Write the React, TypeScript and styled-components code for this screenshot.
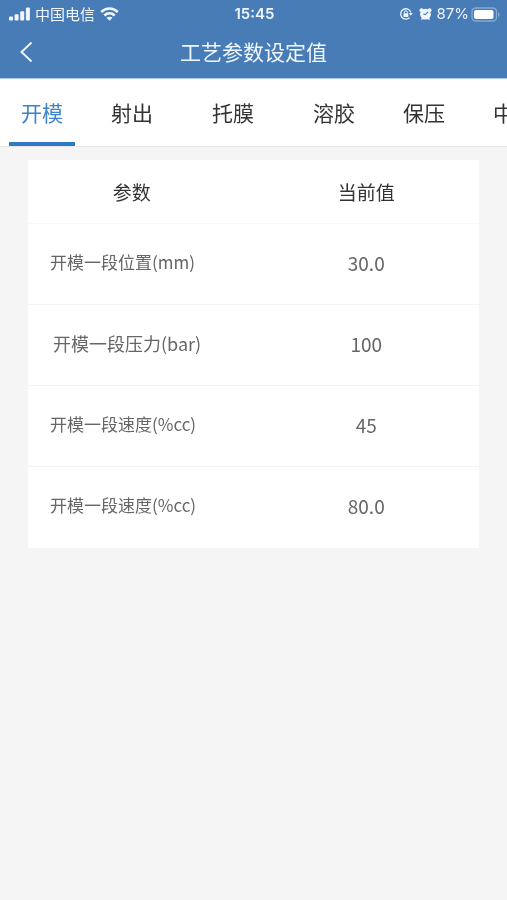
import React, { useState } from "react";
import styled, { createGlobalStyle } from "styled-components";

const GlobalStyle = createGlobalStyle`
  *, *::before, *::after { box-sizing: border-box; }
  body {
    margin: 0;
    background: #f5f5f5;
    font-family: "Noto Sans CJK SC", sans-serif;
  }
`;

const Page = styled.div`
  min-height: 100vh;
  background: #f5f5f5;
`;

const Header = styled.header`
  background: #477cb7;
  color: #eff6fd;
  border-bottom: 1px solid #a9cdf0;
`;

const StatusBar = styled.div`
  display: grid;
  grid-template-columns: 1fr auto 1fr;
  align-items: center;
  height: 28px;
  padding: 0 7px 0 9px;
  font-size: 15px;
  line-height: 20px;
`;

const StatusGroup = styled.div<{ $end?: boolean }>`
  display: flex;
  align-items: center;
  justify-content: ${(p) => (p.$end ? "flex-end" : "flex-start")};
  gap: 5px;
  svg { display: block; flex: none; }
`;

const Clock = styled.time`
  font-family: Inter, sans-serif;
  font-weight: 600;
  font-size: 15px;
`;

const Battery = styled.span`
  display: flex;
  align-items: center;
  gap: 2px;
  font-family: Inter, sans-serif;
  font-size: 15px;
`;

const NavBar = styled.div`
  display: grid;
  grid-template-columns: 48px 1fr 48px;
  align-items: center;
  height: 50px;
  padding-bottom: 4px;
`;

const BackButton = styled.button`
  display: flex;
  align-items: center;
  height: 40px;
  padding: 2px 0 0 19px;
  border: 0;
  background: none;
  color: inherit;
  cursor: pointer;
`;

const Title = styled.h1`
  margin: 0;
  text-align: center;
  font-size: 21px;
  line-height: 30px;
  font-weight: 400;
`;

const TabBar = styled.nav`
  display: flex;
  height: 68px;
  padding-left: 9px;
  overflow-x: auto;
  scrollbar-width: none;
  background: #fff;
  border-bottom: 1px solid #e6e6e6;
`;

const Tab = styled.button<{ $active: boolean; $wide?: boolean }>`
  flex: none;
  margin-left: ${(p) => (p.$wide ? 35 : 24)}px;
  padding: 2px 12px 0;
  border: 0;
  border-bottom: 4px solid ${(p) => (p.$active ? "#3079c4" : "transparent")};
  background: none;
  color: ${(p) => (p.$active ? "#3b83cb" : "#333")};
  font-family: inherit;
  font-size: 21px;
  line-height: 30px;
  cursor: pointer;
  &:first-child { margin-left: 0; }
`;

const Content = styled.main`
  padding: 13px 28px;
`;

const Table = styled.table`
  width: 100%;
  table-layout: fixed;
  border-collapse: separate;
  border-spacing: 0;
  background: #fff;
`;

const HeadCell = styled.th<{ $first?: boolean }>`
  height: 64px;
  padding: ${(p) => (p.$first ? "0 18px 0 0" : "0")};
  border-bottom: 1px solid #f8f8f8;
  color: #333;
  font-size: 19px;
  line-height: 28px;
  font-weight: 400;
`;

const Row = styled.tr`
  &:not(:last-child) > * { border-bottom: 1px solid #f3f3f3; }
`;

const Label = styled.th<{ $large?: boolean }>`
  height: 81px;
  padding: 0 0 5px ${(p) => (p.$large ? 25 : 22)}px;
  text-align: left;
  color: #666;
  font-size: ${(p) => (p.$large ? 18 : 17)}px;
  line-height: 28px;
  font-weight: 400;
  white-space: nowrap;
`;

const Value = styled.td`
  padding: 0 0 3px;
  text-align: center;
  color: #666;
  font-size: 19px;
  line-height: 28px;
`;

const tabs = [
  { name: "开模" },
  { name: "射出" },
  { name: "托膜", wide: true },
  { name: "溶胶", wide: true },
  { name: "保压" },
  { name: "中" },
];

const rows = [
  { label: "开模一段位置(mm)", value: "30.0" },
  { label: "开模一段压力(bar)", value: "100", large: true },
  { label: "开模一段速度(%cc)", value: "45" },
  { label: "开模一段速度(%cc)", value: "80.0" },
];

const SignalIcon = () => (
  <svg width="21" height="14" viewBox="0 0 21 14" fill="currentColor" aria-hidden="true">
    <rect x="0" y="9.5" width="4" height="4" rx="1" />
    <rect x="5.6" y="7.3" width="4" height="6.2" rx="1" />
    <rect x="11.2" y="4.2" width="4" height="9.3" rx="1" />
    <rect x="16.9" y="0.6" width="4" height="12.9" rx="1" />
  </svg>
);

const WifiIcon = () => (
  <svg width="19" height="14" viewBox="0 0 19 14" fill="none" stroke="currentColor" strokeWidth="2.6" aria-hidden="true">
    <path d="M1.2 5C6.2.4 12.8.4 17.8 5" />
    <path d="M4.3 8.4c3.1-2.7 7.3-2.7 10.4 0" />
    <path d="M9.5 13.7 6.5 10.8c1.6-1.4 4.4-1.4 6 0z" fill="currentColor" stroke="none" />
  </svg>
);

const RotationLockIcon = () => (
  <svg width="14" height="14" viewBox="0 0 14 14" fill="none" stroke="currentColor" aria-hidden="true">
    <path d="M11.8 5.4A5.2 5.2 0 1 0 10.6 10.6" strokeWidth="1.3" />
    <path d="M9.8 6h4l-2 2.8z" fill="currentColor" stroke="none" />
    <rect x="4.5" y="6.3" width="4.8" height="3.6" rx=".5" fill="currentColor" stroke="none" />
    <path d="M5.4 6.5V5.3a1.5 1.5 0 0 1 3 0v1.2" />
  </svg>
);

const AlarmIcon = () => (
  <svg width="14" height="14" viewBox="0 0 14 14" aria-hidden="true">
    <g fill="currentColor">
      <circle cx="7.5" cy="7.2" r="5.4" />
      <circle cx="3.5" cy="3.2" r="2" />
      <circle cx="11.5" cy="3.2" r="2" />
      <path d="m3 13 1-3 2 2zM12 13l-1-3-2 2z" />
    </g>
    <path d="M10 4.8 7.3 7.6 5.3 6.9" fill="none" stroke="#477cb7" strokeWidth="1.1" />
  </svg>
);

const BatteryIcon = () => (
  <svg width="29" height="15" viewBox="0 0 29 15" aria-hidden="true">
    <rect x="1" y="1" width="24.5" height="13" rx="3.6" fill="none" stroke="#84a9d4" strokeWidth="1.3" />
    <rect x="3" y="3" width="19.5" height="9" rx="2" fill="#fff" />
    <path d="M27 5.2c2 .7 2 3.9 0 4.6z" fill="#84a9d4" />
  </svg>
);

export default function App() {
  const [active, setActive] = useState("开模");
  return (
    <Page>
      <GlobalStyle />
      <Header>
        <StatusBar>
          <StatusGroup>
            <SignalIcon />
            <span>中国电信</span>
            <WifiIcon />
          </StatusGroup>
          <Clock>15:45</Clock>
          <StatusGroup $end>
            <RotationLockIcon />
            <AlarmIcon />
            <Battery>
              87%
              <BatteryIcon />
            </Battery>
          </StatusGroup>
        </StatusBar>
        <NavBar>
          <BackButton type="button" aria-label="返回">
            <svg width="14" height="22" viewBox="0 0 14 22" fill="none" stroke="currentColor" strokeWidth="1.9" aria-hidden="true">
              <path d="M12.5 1.5 2.5 11l10 9.5" />
            </svg>
          </BackButton>
          <Title>工艺参数设定值</Title>
        </NavBar>
      </Header>
      <TabBar>
        {tabs.map((tab) => (
          <Tab
            key={tab.name}
            type="button"
            $active={tab.name === active}
            $wide={tab.wide}
            aria-pressed={tab.name === active}
            onClick={() => setActive(tab.name)}
          >
            {tab.name}
          </Tab>
        ))}
      </TabBar>
      <Content>
        <Table>
          <thead>
            <tr>
              <HeadCell scope="col" $first>参数</HeadCell>
              <HeadCell scope="col">当前值</HeadCell>
            </tr>
          </thead>
          <tbody>
            {rows.map((row, i) => (
              <Row key={i}>
                <Label scope="row" $large={row.large}>{row.label}</Label>
                <Value>{row.value}</Value>
              </Row>
            ))}
          </tbody>
        </Table>
      </Content>
    </Page>
  );
}
